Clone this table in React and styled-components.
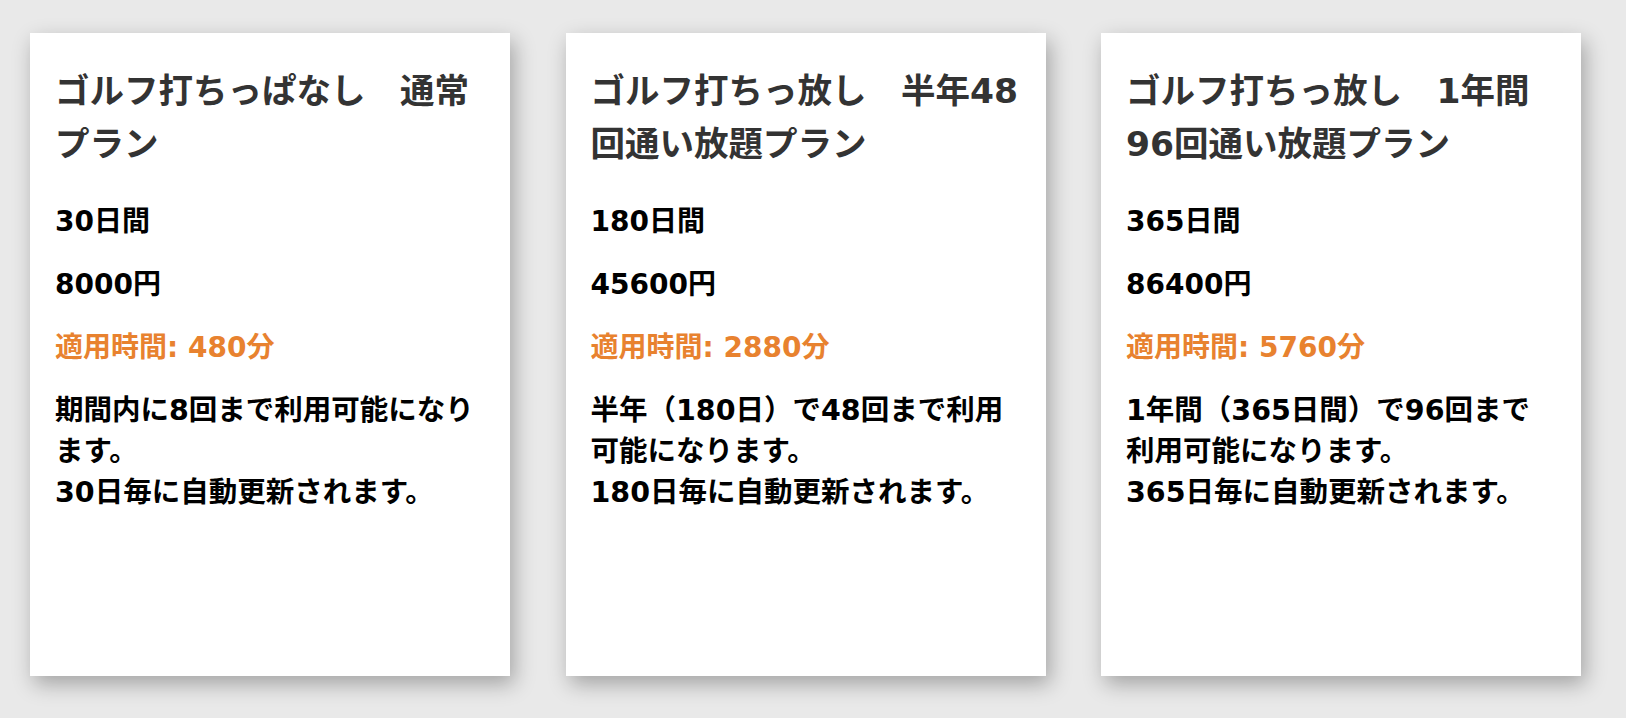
import styled, { createGlobalStyle } from 'styled-components';

const GlobalStyle = createGlobalStyle`
    html, body {
        margin: 0;
        padding: 0;
        background-color: #e9e9e9;
    }

    body {
        font-family: "DejaVu Sans", "Noto Sans CJK JP", sans-serif;
    }
`;

// Card list
const PlanList = styled.div`
    display: flex;
    gap: 55.5px;
    padding: 33px 0 0 30px;
    min-height: 718px;
    box-sizing: border-box;
`;

const PlanCard = styled.div`
    width: 480px;
    height: 643px;
    box-sizing: border-box;
    padding: 32px 25px 0;
    background-color: #fff;
    box-shadow: 4px 8px 20px rgba(0, 0, 0, 0.3);
`;

const PlanTitle = styled.h2`
    margin: 0 0 30px;
    font-size: 34.5px;
    line-height: 53px;
    font-weight: 700;
    color: #333;
`;

const PlanText = styled.p`
    margin: 0 0 22px;
    font-size: ${props => (props.$small ? '28px' : '28.5px')};
    line-height: 41px;
    font-weight: 700;
    color: ${props => (props.$accent ? '#e8822f' : '#000')};
`;

const plans = [
    {
        title: 'ゴルフ打ちっぱなし　通常プラン',
        days: '30日間',
        price: '8000円',
        minutes: 480,
        note: '期間内に8回まで利用可能になります。',
        renew: '30日毎に自動更新されます。',
    },
    {
        title: 'ゴルフ打ちっ放し　半年48回通い放題プラン',
        days: '180日間',
        price: '45600円',
        minutes: 2880,
        note: '半年（180日）で48回まで利用可能になります。',
        renew: '180日毎に自動更新されます。',
    },
    {
        title: 'ゴルフ打ちっ放し　1年間96回通い放題プラン',
        days: '365日間',
        price: '86400円',
        minutes: 5760,
        note: '1年間（365日間）で96回まで利用可能になります。',
        renew: '365日毎に自動更新されます。',
    },
];

function App() {
    return (
        <>
            <GlobalStyle />
            <PlanList>
                {plans.map(plan => (
                    <PlanCard key={plan.title}>
                        <PlanTitle>{plan.title}</PlanTitle>
                        <PlanText $small>{plan.days}</PlanText>
                        <PlanText $small>{plan.price}</PlanText>
                        <PlanText $small $accent>適用時間: {plan.minutes}分</PlanText>
                        <PlanText>
                            {plan.note}
                            <br />
                            {plan.renew}
                        </PlanText>
                    </PlanCard>
                ))}
            </PlanList>
        </>
    );
}

export default App;
